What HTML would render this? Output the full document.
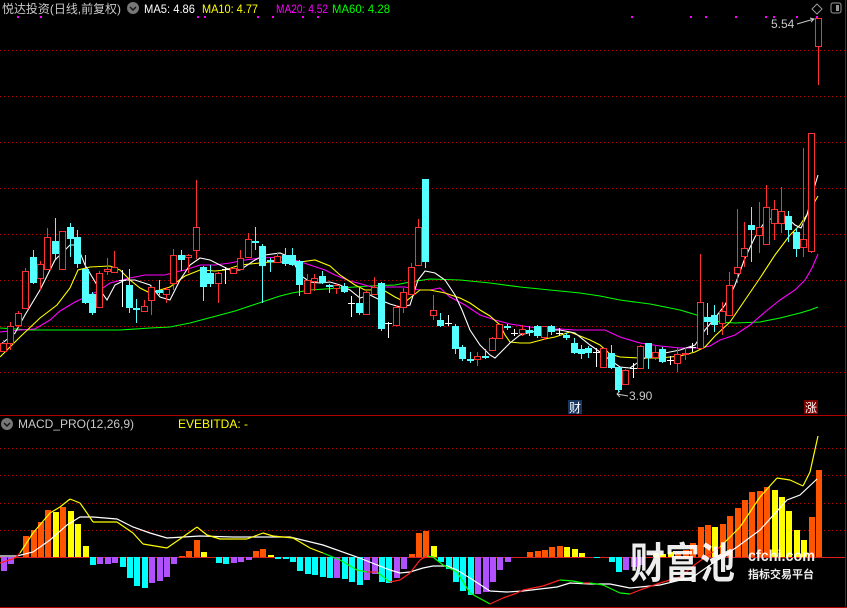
<!DOCTYPE html>
<html><head><meta charset="utf-8">
<style>
html,body{margin:0;padding:0;background:#000;width:847px;height:608px;overflow:hidden}
svg{display:block}
text{font-family:"Liberation Sans","Noto Sans CJK SC",sans-serif}
</style></head><body>
<svg id="s" width="847" height="608" viewBox="0 0 847 608" xmlns="http://www.w3.org/2000/svg">
<rect width="847" height="608" fill="#000"/>
<g id="grid"></g>
<g id="ma"></g>
<g id="cd"></g>
<g id="macd"></g>
<text x="2" y="13" font-size="12" fill="#c8c8c8" textLength="119" lengthAdjust="spacingAndGlyphs">悦达投资(日线,前复权)</text>
<circle cx="133" cy="8" r="6" fill="#777"/>
<path d="M130 7 L133 10 L136 7" stroke="#111" stroke-width="1.4" fill="none"/>
<text x="144" y="13" font-size="12" fill="#fff" textLength="51" lengthAdjust="spacingAndGlyphs">MA5: 4.86</text>
<text x="202" y="13" font-size="12" fill="#ffff00" textLength="56" lengthAdjust="spacingAndGlyphs">MA10: 4.77</text>
<text x="276" y="13" font-size="12" fill="#ff00ff" textLength="52" lengthAdjust="spacingAndGlyphs">MA20: 4.52</text>
<text x="332" y="13" font-size="12" fill="#00ff00" textLength="58" lengthAdjust="spacingAndGlyphs">MA60: 4.28</text>
<path d="M817 4 L822 9 L817 14 L812 9 Z" stroke="#999" fill="none"/>
<rect x="831" y="3" width="10" height="10" rx="2" stroke="#999" fill="none"/>
<rect x="836" y="5" width="3" height="6" fill="#999"/>
<text x="771" y="28" font-size="12" fill="#c8c8c8">5.54</text>
<path d="M797 24 L814 19 M810 18 L814 19 L811 22" stroke="#c8c8c8" fill="none"/>
<text x="629" y="400" font-size="12" fill="#c8c8c8">3.90</text>
<path d="M617 394 L628 396 M620 391 L617 394 L620 397" stroke="#c8c8c8" fill="none"/>
<rect x="568" y="400" width="14" height="14" fill="#17355f"/>
<text x="569" y="412" font-size="12" fill="#fff">财</text>
<rect x="804" y="400" width="14" height="14" fill="#7a0000"/>
<text x="805" y="412" font-size="12" fill="#fff">涨</text>
<circle cx="7" cy="424" r="6" fill="#777"/>
<path d="M4 423 L7 426 L10 423" stroke="#111" stroke-width="1.4" fill="none"/>
<text x="18" y="428" font-size="12" fill="#c8c8c8">MACD_PRO(12,26,9)</text>
<text x="178" y="428" font-size="12" fill="#ffff00">EVEBITDA: -</text>
<g id="wm">
<text x="630" y="578" font-size="42" font-weight="bold" fill="#fff" fill-opacity="0.93" textLength="105" lengthAdjust="spacingAndGlyphs" font-family="'Noto Sans CJK SC',sans-serif">财富池</text>
<text x="748" y="561" font-size="16" font-weight="bold" fill="#fff" fill-opacity="0.93" textLength="67" lengthAdjust="spacingAndGlyphs">cfchi.com</text>
<text x="748" y="578" font-size="11" font-weight="bold" fill="#fff" fill-opacity="0.93" textLength="66" lengthAdjust="spacingAndGlyphs">指标交易平台</text>
</g>
</svg>
<script>
var NS="http://www.w3.org/2000/svg";
function el(p,t,a){var e=document.createElementNS(NS,t);for(var k in a)e.setAttribute(k,a[k]);p.appendChild(e);return e;}
var s=document.getElementById('s');
var g=document.getElementById('grid');
[50,96,142,188,234,280,326,372].forEach(function(y){el(g,'line',{x1:0,x2:845,y1:y+.5,y2:y+.5,stroke:'#c00000','stroke-dasharray':'1 3'});});
[448,475,503,530].forEach(function(y){el(g,'line',{x1:0,x2:845,y1:y+.5,y2:y+.5,stroke:'#c00000','stroke-dasharray':'1 3'});});
el(g,'line',{x1:0,x2:847,y1:415.5,y2:415.5,stroke:'#b00000'});
el(g,'line',{x1:0,x2:847,y1:607.5,y2:607.5,stroke:'#b00000'});
el(g,'line',{x1:845.5,x2:845.5,y1:0,y2:608,stroke:'#b00000'});
el(g,'line',{x1:0,x2:845,y1:557.5,y2:557.5,stroke:'#dd2020'});
[17,40,197,204,257,272,302,317,631,690,705,735,765,773,796,816].forEach(function(x){el(g,'rect',{x:x,y:16,width:2,height:2,fill:'#ff00ff'});});
var ma=document.getElementById('ma');
function pl(pts,c){el(ma,'polyline',{points:pts,fill:'none',stroke:c,'stroke-width':1.1});}
pl("0,328 30,330 60,330 90,330 120,330 150,328 170,327 190,323 205,319 220,315 235,311 250,306 265,301 280,296 292,293 310,290 340,288 370,286 395,285 410,282 430,279 460,280 490,283 520,287 550,290 580,293 600,296 620,300 650,304 680,310 700,316 720,322 735,323 760,322 780,318 800,313 810,310 818,307",'#00ff00');
pl("0,332 20,330 35,329 50,320 60,311 75,302 90,295 100,290 110,283 130,278 145,275 165,275 175,272 185,270 200,265 215,265 230,263 245,260 260,258 285,257 295,260 310,265 325,270 335,275 350,281 365,285 375,288 385,287 405,287 420,290 430,290 440,288 450,297 465,305 480,315 495,320 510,324 530,327 545,329 560,329 575,330 590,330 605,330 620,337 640,343 660,346 680,348 700,348 710,346 720,340 735,335 750,325 765,312 780,300 795,290 805,280 812,268 818,254",'#ff00ff');
pl("0,357 20,337 40,318 57,305 70,288 78,270 90,267 110,266 120,270 130,280 140,288 150,293 160,290 170,287 185,276 200,270 215,271 225,270 240,265 260,263 270,262 285,262 300,262 315,260 330,266 340,275 355,285 365,290 370,290 380,288 395,297 405,302 420,290 430,290 445,293 460,298 470,303 480,310 490,316 500,325 505,335 510,342 520,343 530,343 545,339 555,337 570,332 580,336 590,340 600,345 610,354 620,357 640,358 660,358 680,356 695,352 705,347 715,336 730,322 745,300 760,278 775,255 790,235 800,225 810,210 818,196",'#ffff00');
pl("0,345 15,333 25,315 40,290 55,260 70,245 77,245 85,265 100,290 107,300 115,285 125,280 135,280 150,285 160,297 170,300 180,280 190,265 200,258 210,260 220,265 230,270 240,270 255,260 265,255 280,253 285,255 290,257 295,265 300,275 310,282 320,283 330,282 340,285 350,290 360,298 370,295 380,300 390,304 400,307 410,305 418,280 425,271 435,273 445,280 455,295 462,310 470,330 480,345 490,355 495,358 500,353 510,343 520,335 540,330 560,330 575,333 590,345 600,352 610,360 620,367 630,368 640,361 650,355 665,353 680,350 695,345 705,330 715,318 725,305 735,285 745,258 755,237 766,220 775,218 785,216 795,225 801,228 807,215 812,195 818,175",'#ffffff');
var C="r 343 351 340 351|r 326 343 322 350|r 313 325 311 327|r 271 308 268 309|c 257 283 250 284|r 264 278 261 290|r 237 269 228 270|c 241 254 218 259|r 231 269 231 269|c 227 239 223 257|c 237 264 230 268|c 269 303 255 304|c 294 313 292 315|r 273 307 271 308|r 269 271 258 275|r 267 272 251 272|w 280 280 270 307|c 285 308 269 313|c 308 310 299 323|r 306 311 300 311|r 287 300 285 315|c 290 293 280 295|r 289 294 287 303|r 255 283 249 290|c 255 260 250 271|r 255 257 254 273|r 227 250 180 259|c 267 287 266 301|c 273 284 265 287|r 273 283 272 303|w 269 269 267 284|r 268 273 267 274|r 258 269 250 270|r 239 257 233 258|c 241 243 227 250|c 246 266 244 303|c 260 262 258 272|r 256 262 253 263|c 255 264 248 266|c 255 265 248 266|c 261 285 260 296|r 280 293 274 293|r 278 281 274 291|c 276 283 271 284|c 285 287 284 293|r 285 288 284 294|c 286 292 283 293|w 303 303 296 317|c 303 313 288 315|r 292 314 291 315|r 287 294 277 295|c 283 329 282 331|w 323 323 322 338|r 307 325 305 326|r 292 307 288 313|r 267 294 263 295|r 227 265 219 266|c 179 262 179 268|r 310 315 295 320|c 320 326 313 327|w 323 323 315 326|c 326 349 324 354|c 347 359 345 361|c 359 361 352 363|r 356 359 352 366|c 356 358 349 359|r 338 350 337 351|r 324 338 323 339|c 326 328 324 330|w 333 333 329 336|r 329 333 325 336|c 330 333 326 336|c 326 336 325 338|r 326 337 326 340|c 326 332 325 335|w 333 333 328 336|c 335 338 333 340|c 343 353 338 354|c 349 354 345 359|c 348 353 346 358|w 352 352 348 367|r 348 367 348 367|c 353 368 345 369|c 367 390 367 392|r 370 384 369 385|w 368 368 363 378|r 346 368 345 369|c 343 358 343 369|r 352 357 346 360|c 349 362 347 363|w 360 360 356 365|r 354 363 348 372|r 353 354 348 360|w 347 347 343 352|r 302 348 254 349|c 317 322 303 335|c 315 325 305 332|r 311 323 302 335|r 285 315 272 316|r 267 273 209 283|r 248 256 222 267|c 225 230 207 262|r 227 235 202 253|r 207 244 185 245|r 209 223 200 240|r 211 223 187 233|c 216 230 211 242|c 232 249 228 257|r 239 247 148 257|r 133 251 133 253|r 18 46 18 85".split('|');
var cd=document.getElementById('cd');
C.forEach(function(s_,i){var a=s_.split(' ');var t=a[0],o=+a[1],b=+a[2],h=+a[3],l=+a[4];var x=Math.round(3+7.41*i);
 if(t=='r'){el(cd,'line',{x1:x+.5,x2:x+.5,y1:h,y2:o,stroke:'#ff3232'});el(cd,'line',{x1:x+.5,x2:x+.5,y1:b,y2:l,stroke:'#ff3232'});el(cd,'rect',{x:x-2.5,y:o+.5,width:6,height:Math.max(b-o,1),fill:'#000',stroke:'#ff3232'});}
 else if(t=='c'){el(cd,'line',{x1:x+.5,x2:x+.5,y1:h,y2:l,stroke:'#54ffff'});el(cd,'rect',{x:x-3,y:o,width:7,height:Math.max(b-o,2),fill:'#54ffff'});}
 else{el(cd,'line',{x1:x+.5,x2:x+.5,y1:h,y2:l,stroke:'#fff'});el(cd,'line',{x1:x-3,x2:x+4,y1:o+.5,y2:o+.5,stroke:'#fff'});}
});
var M=document.getElementById('macd');
var B={0:['p',571],1:['p',564],3:['o',536],4:['o',530],5:['o',522],6:['o',510],7:['y',512],8:['o',507],9:['y',511],10:['y',524],11:['y',546],12:['c',565],13:['p',564],14:['p',564],15:['p',563],16:['c',567],17:['c',578],18:['c',586],19:['c',588],20:['p',583],21:['p',581],22:['p',577],23:['p',564],24:['o',556],25:['o',551],26:['o',540],27:['y',552],29:['c',563],30:['c',564],31:['p',563],32:['p',562],33:['p',560],34:['o',551],35:['o',549],36:['y',555],37:['c',559],38:['c',559],39:['c',562],40:['c',571],41:['c',574],42:['c',575],43:['c',577],44:['c',578],45:['p',578],46:['c',579],47:['c',582],48:['c',585],49:['p',580],50:['p',574],51:['c',582],52:['c',583],53:['p',578],54:['p',569],55:['o',554],56:['o',533],57:['o',531],58:['y',546],59:['c',562],60:['c',569],61:['c',582],62:['c',591],63:['c',595],64:['p',594],65:['p',592],66:['p',582],67:['p',570],68:['p',562],71:['o',552],72:['o',551],73:['o',550],74:['o',547],75:['o',546],76:['y',547],77:['y',549],78:['y',553],80:['c',558],82:['c',562],83:['c',572],84:['p',570],85:['p',567],86:['p',565],88:['y',553],89:['y',554],90:['y',552],91:['o',553],92:['o',550],93:['o',543],94:['o',527],95:['o',525],96:['y',527],97:['o',524],98:['o',516],99:['o',508],100:['o',500],101:['o',492],102:['o',491],103:['o',487],104:['y',490],105:['y',497],106:['y',511],107:['y',530],108:['y',540],109:['o',517],110:['o',470]};
var col={p:'#b050ff',c:'#00ffff',o:'#ff5500',y:'#ffff00'};
for(var k in B){var x=Math.round(3+7.41*k)-2;var y=B[k][1];var y0=Math.min(y,557),hh=Math.abs(y-557)||1;el(M,'rect',{x:x,y:y0,width:6,height:hh,fill:col[B[k][0]]});}
function line(pts,c){el(M,'polyline',{points:pts,fill:'none',stroke:c,'stroke-width':1.2});}
line("0,556 17,556 33,552 50,540 67,525 80,517 93,517 117,519 133,527 150,533 167,538 200,536 233,537 267,537 290,537 323,545 357,557 390,570 400,573 410,572 423,568 433,566 447,566 457,570 473,580 490,591 507,592 523,591 557,587 570,583 590,584 610,584 630,588 660,585 693,577 713,563 737,547 760,530 787,500 800,495 817,479",'#fff');
var P=[[0,563],[15,558],[20,553],[33,533],[50,513],[60,507],[70,499],[80,503],[87,513],[93,522],[117,522],[133,533],[143,544],[167,548],[180,539],[197,527],[207,535],[220,539],[247,539],[263,533],[273,536],[293,538],[300,542],[310,548],[323,553],[340,560],[357,570],[367,572],[377,572],[390,582],[400,580],[410,573],[420,560],[427,556],[433,557],[443,565],[457,572],[470,593],[490,604],[503,598],[517,593],[523,590],[543,586],[560,580],[573,581],[583,583],[590,583],[603,585],[620,593],[630,594],[640,590],[660,583],[680,577],[697,563],[720,547],[740,527],[760,497],[777,478],[790,480],[803,486],[810,472],[818,436]];
for(var i=1;i<P.length;i++){var a=P[i-1],b=P[i];var c=(b[1]<557&&a[1]<557)?'#ffff00':(b[1]>a[1]?'#00ff00':'#ff2020');line(a[0]+','+a[1]+' '+b[0]+','+b[1],c);}
s.appendChild(document.getElementById('wm'));
</script>
</body></html>
